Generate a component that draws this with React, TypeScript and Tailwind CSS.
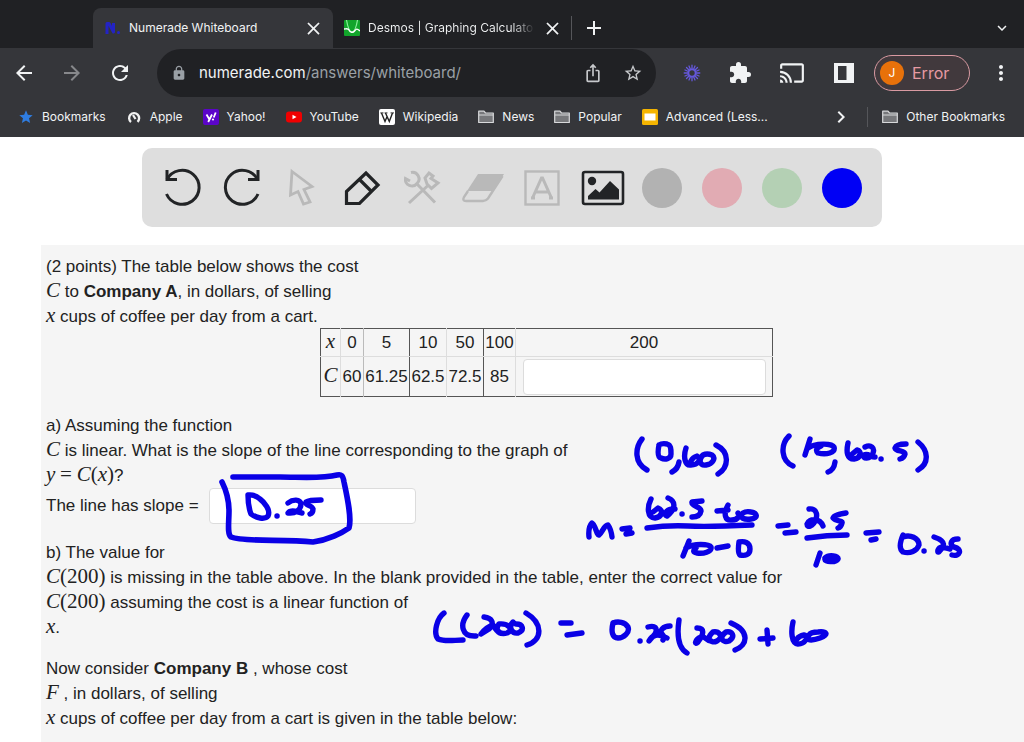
import React from "react";
import {
  MdArrowBack,
  MdArrowForward,
  MdRefresh,
  MdLock,
  MdIosShare,
  MdStarBorder,
  MdStar,
  MdExtension,
  MdCast,
  MdMoreVert,
  MdClose,
  MdAdd,
  MdKeyboardArrowDown,
  MdChevronRight,
} from "react-icons/md";

const SERIF = "font-['Liberation_Serif',serif]";

function NumeradeIcon() {
  return (
    <svg viewBox="0 0 16 16" className="size-4 shrink-0" aria-hidden="true">
      <path d="M2 14V3.500H4L8.500 12V3" fill="none" stroke="#2323c4" strokeWidth="3" strokeLinejoin="round" />
      <circle cx="13.500" cy="12.500" r="1.500" fill="#2323c4" />
    </svg>
  );
}

function DesmosIcon() {
  return (
    <svg viewBox="0 0 16 16" className="size-4 shrink-0" aria-hidden="true">
      <rect width="16" height="16" rx="1" fill="#12a52b" />
      <path d="M2.500 0C4 9 6 12 8 12S12 9 13.500 0" fill="none" stroke="#8af09a" strokeWidth="1.200" />
      <path d="M0 9C2 9 4 8 5 10C6 12.500 9 13 10.500 11S13 8 16 11" fill="none" stroke="#fff" strokeWidth="1.400" />
    </svg>
  );
}

function AppleBookmarkIcon() {
  return (
    <svg viewBox="0 0 16 16" className="size-4" aria-hidden="true">
      <path d="M5 13A5 5 0 1 1 11.500 12.800" fill="none" stroke="#f1f1f1" strokeWidth="2.400" />
      <path d="M7 6 9.500 10" stroke="#f1f1f1" strokeWidth="2.200" />
    </svg>
  );
}

function YahooIcon() {
  return (
    <svg viewBox="0 0 16 16" className="size-4" aria-hidden="true">
      <rect width="16" height="16" rx="2" fill="#5b05c9" />
      <path d="M3.500 5.500 6.200 10M9 5.500 5.200 13M12.700 3.500 10.700 8.500" stroke="#fff" strokeWidth="1.800" fill="none" />
      <circle cx="10" cy="10.500" r="1.100" fill="#fff" />
    </svg>
  );
}

function YouTubeIcon() {
  return (
    <svg viewBox="0 0 16 16" className="size-4" aria-hidden="true">
      <rect y="2.500" width="16" height="11" rx="3" fill="#f00000" />
      <path d="M6.500 5.700v4.600L10.500 8z" fill="#fff" />
    </svg>
  );
}

function WikipediaIcon() {
  return (
    <svg viewBox="0 0 16 16" className="size-4" aria-hidden="true">
      <rect width="16" height="16" rx="2" fill="#fff" />
      <path d="M2.500 4 6 12.500 8.300 7M6.500 4 10.300 12.500 13.500 4" fill="none" stroke="#222" strokeWidth="1.400" />
      <path d="M1.300 3.900H4.500M5.500 3.900H8.500M11.500 3.900H15" stroke="#222" strokeWidth="0.900" />
    </svg>
  );
}

function FolderIcon() {
  return (
    <svg viewBox="0 0 16 16" className="size-4" aria-hidden="true">
      <path d="M0.700 2.200H6L7.500 4H15.300V13.500H0.700z" fill="#77787b" stroke="#d8d9db" strokeWidth="1.200" strokeLinejoin="round" />
      <path d="M1 6H15" stroke="#d8d9db" strokeWidth="1" />
    </svg>
  );
}

function SlidesIcon() {
  return (
    <svg viewBox="0 0 16 16" className="size-4" aria-hidden="true">
      <rect width="16" height="16" rx="1.500" fill="#f4b400" />
      <rect x="2.500" y="4.500" width="11" height="7" fill="#fff" />
    </svg>
  );
}

function LoomIcon() {
  return (
    <svg viewBox="0 0 18 18" className="size-[18px]" aria-hidden="true">
      <g stroke="#6558dc" fill="none" strokeLinecap="round">
        <circle cx="9" cy="9" r="3.600" strokeWidth="1.800" />
        <path
          d="M9 1.200V5M9 13V16.800M1.200 9H5M13 9H16.800M3.500 3.500 6.200 6.200M11.800 11.800 14.500 14.500M3.500 14.500 6.200 11.800M11.800 6.200 14.500 3.500M6 2 7.500 5.500M12 2 10.500 5.500M6 16 7.500 12.500M12 16 10.500 12.500M2 6 5.500 7.500M2 12 5.500 10.500M16 6 12.500 7.500M16 12 12.500 10.500"
          strokeWidth="1.300"
        />
      </g>
    </svg>
  );
}

function SidePanelIcon() {
  return (
    <svg viewBox="0 0 20 20" className="size-5" aria-hidden="true">
      <path fill="#f1f3f4" fillRule="evenodd" d="M0 0H20V20H0zM4 3V17H12.500V3z" />
    </svg>
  );
}

type Bookmark = { label: string; icon: React.ReactNode };

const bookmarks: Bookmark[] = [
  { label: "Bookmarks", icon: <MdStar className="size-4 text-[#2f7de1]" /> },
  { label: "Apple", icon: <AppleBookmarkIcon /> },
  { label: "Yahoo!", icon: <YahooIcon /> },
  { label: "YouTube", icon: <YouTubeIcon /> },
  { label: "Wikipedia", icon: <WikipediaIcon /> },
  { label: "News", icon: <FolderIcon /> },
  { label: "Popular", icon: <FolderIcon /> },
  { label: "Advanced (Less...", icon: <SlidesIcon /> },
];

function BookmarkLink({ label, icon }: Bookmark) {
  return (
    <a href="#" className="flex shrink-0 items-center gap-2 whitespace-nowrap">
      {icon}
      {label}
    </a>
  );
}

function BrowserChrome() {
  return (
    <header className="bg-[#35363a] font-['Inter',sans-serif] text-xs text-[#f1f3f4]">
      <div className="flex h-12 items-end bg-[#202124]">
        <div className="ml-[93px] flex h-10 w-60 items-center rounded-t-lg bg-[#35363a] pr-2 pl-3">
          <NumeradeIcon />
          <span className="ml-2 flex-1 whitespace-nowrap">Numerade Whiteboard</span>
          <button aria-label="Close Numerade tab" className="flex size-6 items-center justify-center">
            <MdClose className="size-[21px]" />
          </button>
        </div>
        <div className="flex h-10 w-[238px] items-center pr-[7px] pl-[11px]">
          <DesmosIcon />
          <span className="ml-2 whitespace-nowrap bg-linear-to-r from-[#f1f3f4] from-85% to-transparent to-98% bg-clip-text text-transparent">
            Desmos | Graphing Calculator
          </span>
          <button aria-label="Close Desmos tab" className="ml-auto flex size-6 items-center justify-center">
            <MdClose className="size-[21px]" />
          </button>
        </div>
        <div className="flex h-10 items-center">
          <span className="h-6 w-px bg-[#55565a]" />
          <button aria-label="New tab" className="ml-[10px] flex size-6 items-center justify-center">
            <MdAdd className="size-6" />
          </button>
        </div>
        <button aria-label="Search tabs" className="mr-[10px] ml-auto flex h-10 w-6 items-center justify-center">
          <MdKeyboardArrowDown className="size-[18px]" />
        </button>
      </div>

      <div className="flex items-center">
        <button aria-label="Back" className="flex w-12 justify-center">
          <MdArrowBack className="size-6" />
        </button>
        <button aria-label="Forward" className="flex w-12 justify-center text-[#87888b]">
          <MdArrowForward className="size-6" />
        </button>
        <button aria-label="Reload" className="flex w-12 justify-center">
          <MdRefresh className="size-6" />
        </button>
        <div className="mt-px ml-[13px] flex h-12 min-w-0 flex-1 items-center rounded-full bg-[#202124] pr-[11px] pl-[14px]">
          <MdLock className="size-4 shrink-0 text-[#9aa0a6]" />
          <div className="ml-3 flex-1 truncate text-[15px] text-[#9aa0a6]">
            <span className="text-[#f1f3f4]">numerade.com</span>/answers/whiteboard/
          </div>
          <button aria-label="Share" className="mr-2 flex w-10 justify-center text-[#c6c8cb]">
            <MdIosShare className="size-5" />
          </button>
          <button aria-label="Bookmark this page" className="flex w-6 justify-center text-[#c6c8cb]">
            <MdStarBorder className="size-5" />
          </button>
        </div>
        <button aria-label="Loom" className="ml-3 flex w-12 justify-center">
          <LoomIcon />
        </button>
        <button aria-label="Extensions" className="flex w-12 justify-center">
          <MdExtension className="size-6" />
        </button>
        <button aria-label="Cast" className="ml-1 flex w-12 justify-center">
          <MdCast className="size-[26px]" />
        </button>
        <button aria-label="Side panel" className="ml-1 flex w-12 justify-center">
          <SidePanelIcon />
        </button>
        <button className="ml-[6px] flex h-9 w-24 items-center gap-2 rounded-full border border-[#d99aa2] bg-[#41393d] pl-[5px] text-base text-[#e79aa3]">
          <span className="flex size-6 items-center justify-center rounded-full bg-[#e8710a] text-xs text-white">J</span>
          Error
        </button>
        <button aria-label="Menu" className="ml-2 flex w-[46px] justify-center">
          <MdMoreVert className="size-6" />
        </button>
      </div>

      <nav aria-label="Bookmarks" className="flex h-10 items-center gap-5 pr-[19px] pl-[18px]">
        {bookmarks.map((b) => (
          <BookmarkLink key={b.label} {...b} />
        ))}
        <div className="ml-auto flex items-center">
          <button aria-label="More bookmarks" className="flex w-6 justify-center">
            <MdChevronRight className="size-6" />
          </button>
          <span className="mx-[14px] h-5 w-px bg-[#55565a]" />
          <BookmarkLink label="Other Bookmarks" icon={<FolderIcon />} />
        </div>
      </nav>
    </header>
  );
}

function ToolButton({ label, children }: { label: string; children: React.ReactNode }) {
  return (
    <button aria-label={label} className="flex w-15 items-center justify-center">
      <svg viewBox="0 0 48 48" className="size-12" fill="none" aria-hidden="true">
        {children}
      </svg>
    </button>
  );
}

function Swatch({ label, color }: { label: string; color: string }) {
  return (
    <button aria-label={label} className="flex w-15 items-center justify-center">
      <span className={`size-10 rounded-full ${color}`} />
    </button>
  );
}

function WhiteboardToolbar() {
  const dark = "#222426";
  const dim = "#b9b9b9";
  return (
    <div role="toolbar" aria-label="Drawing tools" className="mx-auto mt-[11px] flex h-[79px] max-w-full justify-center rounded-[10px] bg-[#dedede] px-[10px]">
      <ToolButton label="Undo">
        <g stroke={dark} strokeWidth="3">
          <path d="M9 15.500A17 17 0 1 1 8.500 30" />
          <path d="M9 6V15.500H19" />
        </g>
      </ToolButton>
      <ToolButton label="Redo">
        <g stroke={dark} strokeWidth="3">
          <path d="M39.500 15.500A17 17 0 1 0 40 30" />
          <path d="M40 6V15.500H30" />
        </g>
      </ToolButton>
      <ToolButton label="Select">
        <path d="M14 7.500 34 22.500 26 25.500 32 38 25.500 40 20 27.500 12.500 31z" stroke={dim} strokeWidth="2.800" />
      </ToolButton>
      <ToolButton label="Pen">
        <g stroke={dark} strokeWidth="3.200">
          <path d="M8.500 39.500V27.500L28 9 40 21 21.500 39.500z" />
          <path d="M21.500 15.500 33.500 27.500" />
        </g>
      </ToolButton>
      <ToolButton label="Tools">
        <g stroke={dim} strokeWidth="3">
          <path d="M11 39 31 20.500M19 20 37 38.500" />
          <path d="M13 8.500A6.500 6.500 0 0 1 19 19.500A6.500 6.500 0 0 1 7.500 14.500L12 17" />
          <path d="M27 14 31 9 35 12 33 14.500 40 19 33.500 24.500 29 20z" />
        </g>
      </ToolButton>
      <ToolButton label="Eraser">
        <path d="M20 10H46L35 27H9z" fill={dim} />
        <path d="M10 27 6 33Q4 37 8 37H25Q28 37 30 34.500L44.500 12" stroke={dim} strokeWidth="2.400" />
      </ToolButton>
      <ToolButton label="Text">
        <rect x="7.500" y="7.500" width="33" height="33" stroke={dim} strokeWidth="2.400" />
        <path d="M14.500 34 23.500 14H24.500L33.500 34M18 28H30M13 34H17M31 34H35" stroke={dim} strokeWidth="3" />
      </ToolButton>
      <ToolButton label="Image">
        <rect x="5" y="8" width="40" height="32" rx="2" stroke={dark} strokeWidth="2.600" />
        <circle cx="14" cy="17" r="4.200" fill={dark} />
        <path d="M10 35.500V32L17.500 25 21.500 28.500 32 17 41 25.500V35.500z" fill={dark} />
      </ToolButton>
      <Swatch label="Grey" color="bg-[#b2b2b2]" />
      <Swatch label="Pink" color="bg-[#e1abb3]" />
      <Swatch label="Green" color="bg-[#b4d0b4]" />
      <Swatch label="Blue" color="bg-[#0000f5]" />
    </div>
  );
}

function Sym({ children }: { children: React.ReactNode }) {
  return <i className={`${SERIF} text-[21px] leading-none`}>{children}</i>;
}

function Fn({ arg, italic = false }: { arg: string; italic?: boolean }) {
  return (
    <span className={`${SERIF} text-[21px] leading-none`}>
      <i>C</i>({italic ? <i>{arg}</i> : arg})
    </span>
  );
}

function Line({ children }: { children: React.ReactNode }) {
  return <span className="block h-[25px] whitespace-nowrap leading-[25px]">{children}</span>;
}

function CostTable() {
  return (
    <table className="-mt-px ml-[274px] table-fixed border-collapse border border-[#555] text-center">
      <colgroup>
        <col className="w-5 border-r border-[#ddd]" />
        <col className="w-[23px] border-r border-[#bbb]" />
        <col className="w-[46px] border-r border-[#555]" />
        <col className="w-[37px] border-r border-[#ddd]" />
        <col className="w-[37px] border-r border-[#555]" />
        <col className="w-8 border-r border-[#ddd]" />
        <col className="w-[257px]" />
      </colgroup>
      <tbody>
        <tr className="h-7 border-b border-[#ddd]">
          <th scope="row" className="p-0 font-normal leading-6"><Sym>x</Sym></th>
          <td className="p-0">0</td>
          <td className="p-0">5</td>
          <td className="p-0">10</td>
          <td className="p-0">50</td>
          <td className="p-0">100</td>
          <td className="p-0">200</td>
        </tr>
        <tr className="h-10">
          <th scope="row" className="p-0 font-normal leading-6"><Sym>C</Sym></th>
          <td className="p-0">60</td>
          <td className="p-0">61.25</td>
          <td className="p-0">62.5</td>
          <td className="p-0">72.5</td>
          <td className="p-0">85</td>
          <td className="p-0 pr-[6px] pl-[7px]">
            <input aria-label="Cost at 200 cups" className="block h-9 w-full rounded border border-[#dcdcdc] bg-white px-2" />
          </td>
        </tr>
      </tbody>
    </table>
  );
}

const strokes: string[] = [
  "M248 495C248 501 249 509 251 514C256 518 265 520 268 516C271 510 264 502 260 499Q254 494 248 495",
  "M277 516h.1",
  "M288 503C293 499 300 499 301 504C301 510 295 514 288 513C291 509 297 512 302 513",
  "M321 500C315 500 309 500 306 502C305 506 312 505 313 509Q313 513 310 514",
  "M642 439C635 448 634 463 647 470",
  "M659 445C658 450 657 457 661 458C665 460 671 459 671 454C671 449 671 445 667 444Q662 443 659 445",
  "M679 462Q678 469 672 472",
  "M686 448C683 457 685 466 691 465C698 465 702 459 697 456Q693 457 691 461",
  "M703 455C698 460 700 466 706 465C713 464 716 458 712 455Q707 453 703 455",
  "M716 445C730 452 729 467 718 474",
  "M651 499C647 507 647 518 655 518C662 517 664 510 658 508L653 512",
  "M668 498C676 501 676 509 667 516C662 514 668 508 675 509",
  "M682 514h.1",
  "M702 501L692 502C691 507 701 506 701 511Q700 517 692 517",
  "M717 511L728 510",
  "M728 505C723 514 725 521 732 520C739 520 740 514 738 513",
  "M743 513C738 518 745 520 751 519C759 518 757 513 751 512Q746 511 743 513",
  "M647 528Q668 525 688 526T752 525",
  "M589 537Q588 527 592 523C595 524 597 536 599 535C602 533 604 525 608 525Q611 529 612 537",
  "M622 529L630 528",
  "M626 534L632 533",
  "M689 541L683 556",
  "M686 548C694 543 709 544 711 547C712 552 703 554 697 553Q691 552 696 548",
  "M717 548L728 546",
  "M739 542C738 549 738 554 740 555C745 556 750 555 750 549C750 542 744 541 739 542",
  "M778 526L788 525",
  "M785 533L796 532",
  "M789 436C780 445 781 461 793 466",
  "M810 439L805 455",
  "M808 448C815 443 832 443 834 447C836 453 826 455 818 453Q814 449 821 446",
  "M835 462Q834 470 828 472",
  "M848 443C846 452 847 459 854 459C861 458 862 451 857 450L851 455",
  "M865 447C871 444 875 448 873 453C870 460 862 459 864 455C868 453 871 457 875 457",
  "M881 459h.1",
  "M906 444C900 444 896 445 895 448C896 452 905 450 905 454Q904 458 900 459",
  "M918 442C928 450 930 463 918 470",
  "M809 509C815 508 818 513 816 519C813 527 807 528 807 524C809 518 820 518 823 526",
  "M846 513C840 514 834 515 833 518C836 522 843 520 842 523Q841 527 838 528",
  "M807 538Q827 535 847 535",
  "M820 553L816 565",
  "M825 558C829 554 839 556 838 559C836 563 824 562 825 559L834 559",
  "M866 533L879 532",
  "M871 540L876 539",
  "M903 535C900 542 899 549 903 552C910 554 917 551 919 545C919 538 910 534 903 537",
  "M924 551h.1",
  "M934 537C940 539 945 542 943 546C940 552 937 554 938 550C940 545 945 548 950 549",
  "M958 539C951 539 949 544 954 547C963 549 960 557 952 555",
  "M444 613C437 618 433 633 438 639C445 642 454 640 463 640",
  "M467 615C460 624 461 637 476 636",
  "M484 617C492 618 495 623 489 629L481 634Q486 627 493 625C496 630 498 632 500 633",
  "M499 624C494 630 500 635 507 633C514 630 509 623 499 624",
  "M513 622C508 627 512 634 518 633C525 630 523 624 516 624",
  "M526 613C543 623 543 640 527 645",
  "M561 623L571 623",
  "M567 635L582 633",
  "M613 623C611 631 612 638 618 638C624 638 630 632 628 627C625 622 618 621 613 623",
  "M640 641h.1",
  "M648 627C655 625 658 628 655 634L649 641C652 635 658 633 667 638",
  "M670 626C663 626 659 631 662 634Q665 637 663 640",
  "M679 620C677 634 678 648 687 653",
  "M697 628C705 628 704 634 698 642C694 646 695 639 701 637C705 635 706 641 711 641",
  "M713 632C705 639 711 644 717 641C725 636 718 631 713 632",
  "M726 632C718 638 723 643 729 641C736 636 732 631 726 632",
  "M731 623C750 631 748 645 735 650",
  "M760 639L773 638",
  "M767 630L768 644",
  "M793 622C791 631 791 643 798 644C805 644 810 636 804 635Q799 636 797 639",
  "M809 635C804 641 812 641 820 638C830 634 826 631 818 632Q811 632 809 635",
];

function Ink() {
  return (
    <svg
      viewBox="41 245 983 497"
      className="pointer-events-none absolute top-0 left-0 h-[497px] w-[983px] max-w-none"
      fill="none"
      stroke="#0a00e6"
      strokeLinecap="round"
      strokeLinejoin="round"
      role="img"
      aria-label="Handwritten working"
    >
      <path
        d="M222 482C227 492 229 502 229 511C229 522 227 534 231 537C243 542 282 539 313 542C328 540 342 533 349 528C352 518 347 496 344 482C343 475 341 474 337 475C322 479 300 477 280 477H233"
        strokeWidth="5.600"
      />
      <path d={strokes.join("")} strokeWidth="5.400" />
    </svg>
  );
}

function Problem() {
  return (
    <main className="relative mt-[18px] ml-[41px] flex-1 overflow-hidden bg-[#f5f5f5] pt-[9px] pb-3 pl-[5px] font-['Liberation_Sans',sans-serif] text-[17px] text-[#222]">
      <p>
        <Line>(2 points) The table below shows the cost</Line>
        <Line><Sym>C</Sym> to <b>Company A</b>, in dollars, of selling</Line>
        <Line><Sym>x</Sym> cups of coffee per day from a cart.</Line>
      </p>
      <CostTable />
      <div className="mt-4">
        <Line>a) Assuming the function</Line>
        <Line><Sym>C</Sym> is linear. What is the slope of the line corresponding to the graph of</Line>
        <Line>
          <Sym>y</Sym> <span className={`${SERIF} text-[21px] leading-none`}>=</span> <Fn arg="x" italic />?
        </Line>
        <div className="flex h-9 items-center">
          <label htmlFor="slope">The line has slope =</label>
          <input id="slope" className="ml-[10px] h-9 w-[207px] rounded border border-[#dcdcdc] bg-white px-2" />
        </div>
      </div>
      <p className="mt-4">
        <Line>b) The value for</Line>
        <Line><Fn arg="200" /> is missing in the table above. In the blank provided in the table, enter the correct value for</Line>
        <Line><Fn arg="200" /> assuming the cost is a linear function of</Line>
        <Line><Sym>x</Sym>.</Line>
      </p>
      <p className="mt-4">
        <Line>Now consider <b>Company B</b> , whose cost</Line>
        <Line><Sym>F</Sym> , in dollars, of selling</Line>
        <Line><Sym>x</Sym> cups of coffee per day from a cart is given in the table below:</Line>
      </p>
      <Ink />
    </main>
  );
}

export default function App() {
  return (
    <div className="flex min-h-screen flex-col bg-white">
      <BrowserChrome />
      <WhiteboardToolbar />
      <Problem />
    </div>
  );
}
